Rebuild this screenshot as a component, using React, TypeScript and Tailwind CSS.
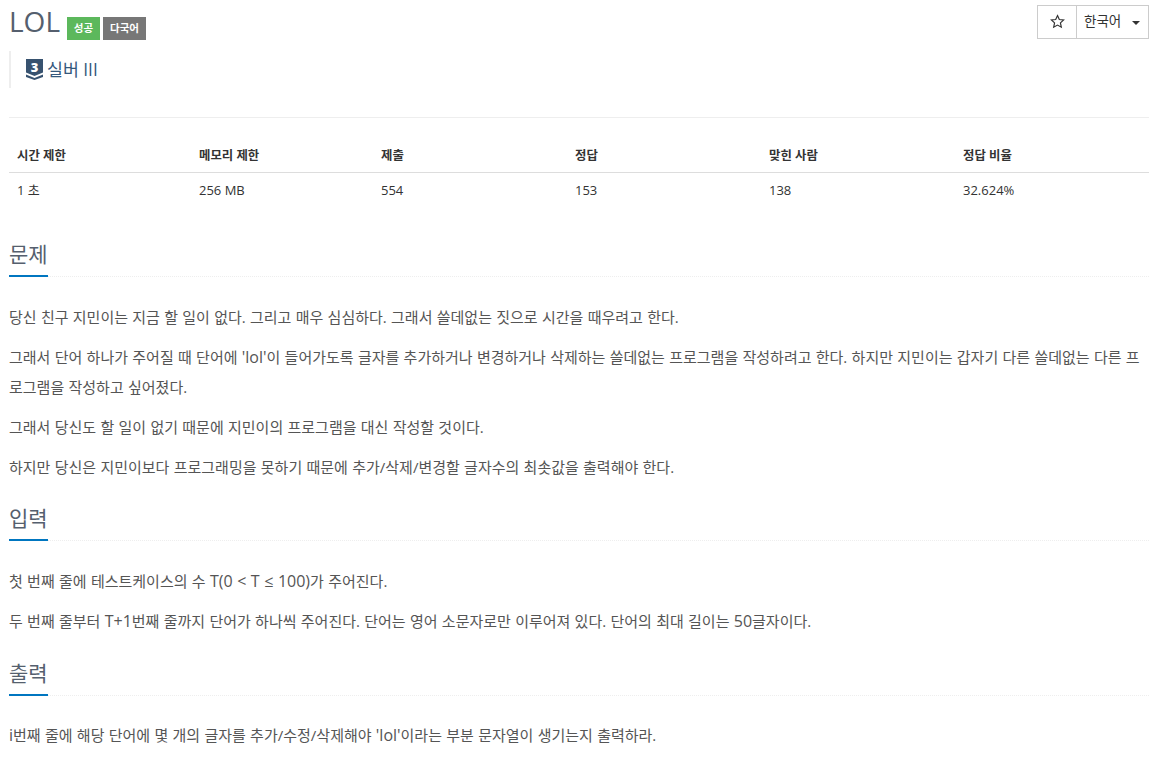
const font = "font-['Open_Sans','Noto_Sans_CJK_KR',sans-serif]"

const headers = [
  { label: '시간 제한', value: '1 초', w: 'w-[182px]' },
  { label: '메모리 제한', value: '256 MB', w: 'w-[182px]' },
  { label: '제출', value: '554', w: 'w-[194px]' },
  { label: '정답', value: '153', w: 'w-[194px]' },
  { label: '맞힌 사람', value: '138', w: 'w-[194px]' },
  { label: '정답 비율', value: '32.624%', w: 'flex-1' },
]

function SectionTitle({ title }: { title: string }) {
  return (
    <div className="border-b border-dotted border-[#eee] h-[37px]">
      <h2 className="inline-block h-[37px] border-b-2 border-[#0076c0] text-[21px] leading-[28px] font-normal text-[#555f6e]">
        {title}
      </h2>
    </div>
  )
}

function Para({ children }: { children: React.ReactNode }) {
  return <p className="text-[15px] leading-[30px] [word-spacing:0.4px] text-[#555] mb-[10px]">{children}</p>
}

function En({ children }: { children: React.ReactNode }) {
  return <span className="text-[16px] leading-none">{children}</span>
}

export default function App() {
  return (
    <div className={`${font} bg-white w-[1160px] h-[762px] overflow-hidden pl-[9px] pr-[11px] text-[#333]`}>
      <div className="flex justify-between h-[51px]">
        <div className="flex items-start">
          <h1 className="text-[28px] leading-[42px] font-normal text-[#555f6e]">LOL</h1>
          <span className="ml-[7px] mt-[17px] h-[23px] w-[33px] bg-[#5cb85c] text-white text-[10.5px] font-bold leading-[23px] text-center">성공</span>
          <span className="ml-[3px] mt-[17px] h-[23px] w-[43px] bg-[#777] text-white text-[10.5px] font-semibold leading-[23px] text-center">다국어</span>
        </div>
        <div className="flex mt-[5px] h-[34px] border border-[#ccc]">
          <div className="w-[39px] border-r border-[#ccc] flex items-center justify-center pb-[2px]">
            <svg width="15" height="15" viewBox="0 0 24 24" fill="none" stroke="#333" strokeWidth="1.9">
              <path d="M12 2.5l2.9 6.3 6.9.8-5.1 4.7 1.4 6.8-6.1-3.4-6.1 3.4 1.4-6.8-5.1-4.7 6.9-.8z" />
            </svg>
          </div>
          <div className="w-[71px] flex items-center pl-[7px] pb-[2px] text-[13.5px] text-[#333]">
            한국어
            <span className="ml-[11px] mt-[4px] w-0 h-0 border-x-[4px] border-x-transparent border-t-[4px] border-t-[#333]" />
          </div>
        </div>
      </div>

      <div className="border-l-[2px] border-[#eee] h-[37px] pl-[15px] flex items-center">
        <svg width="17" height="21" viewBox="0 0 17 21" className="mr-[4px]">
          <path d="M0 0h17v13.5l-8.5 3.5L0 13.5z" fill="#37526f" />
          <path d="M0 15.5l8.5 3.5 8.5-3.5V18l-8.5 3L0 18z" fill="#37526f" />
          <text x="8.5" y="12.5" textAnchor="middle" fontSize="13" fontWeight="800" fill="#fff" fontFamily="Open Sans">3</text>
        </svg>
        <span className="text-[17.3px] text-[#35587c]">실버 III</span>
      </div>

      <div className="mt-[29px] border-t border-[#eee] pt-[18px]">
        <div className="flex border-b border-[#ddd] h-[37px] items-center pl-[8px] pt-[4px] text-[12.4px] font-bold text-[#333]">
          {headers.map((h) => (
            <div key={h.label} className={h.w}>{h.label}</div>
          ))}
        </div>
        <div className="flex h-[36px] items-center pl-[8px] text-[13px] text-[#333]">
          {headers.map((h) => (
            <div key={h.label} className={h.w}>{h.value}</div>
          ))}
        </div>
      </div>

      <div className="mt-[31px]">
        <SectionTitle title="문제" />
        <div className="mt-[25px]">
          <Para>당신 친구 지민이는 지금 할 일이 없다. 그리고 매우 심심하다. 그래서 쓸데없는 짓으로 시간을 때우려고 한다.</Para>
          <Para>그래서 단어 하나가 주어질 때 단어에 <En>'lol'</En>이 들어가도록 글자를 추가하거나 변경하거나 삭제하는 쓸데없는 프로그램을 작성하려고 한다. 하지만 지민이는 갑자기 다른 쓸데없는 다른 프로그램을 작성하고 싶어졌다.</Para>
          <Para>그래서 당신도 할 일이 없기 때문에 지민이의 프로그램을 대신 작성할 것이다.</Para>
          <Para>하지만 당신은 지민이보다 프로그래밍을 못하기 때문에 추가/삭제/변경할 글자수의 최솟값을 출력해야 한다.</Para>
        </div>
      </div>

      <div className="mt-[22px]">
        <SectionTitle title="입력" />
        <div className="mt-[25px]">
          <Para>첫 번째 줄에 테스트케이스의 수 <En>T(0 &lt; T ≤ 100)</En>가 주어진다.</Para>
          <Para>두 번째 줄부터 <En>T+1</En>번째 줄까지 단어가 하나씩 주어진다. 단어는 영어 소문자로만 이루어져 있다. 단어의 최대 길이는 <En>50</En>글자이다.</Para>
        </div>
      </div>

      <div className="mt-[23px]">
        <SectionTitle title="출력" />
        <div className="mt-[24px]">
          <Para><En>i</En>번째 줄에 해당 단어에 몇 개의 글자를 추가/수정/삭제해야 <En>'lol'</En>이라는 부분 문자열이 생기는지 출력하라.</Para>
        </div>
      </div>
    </div>
  )
}
